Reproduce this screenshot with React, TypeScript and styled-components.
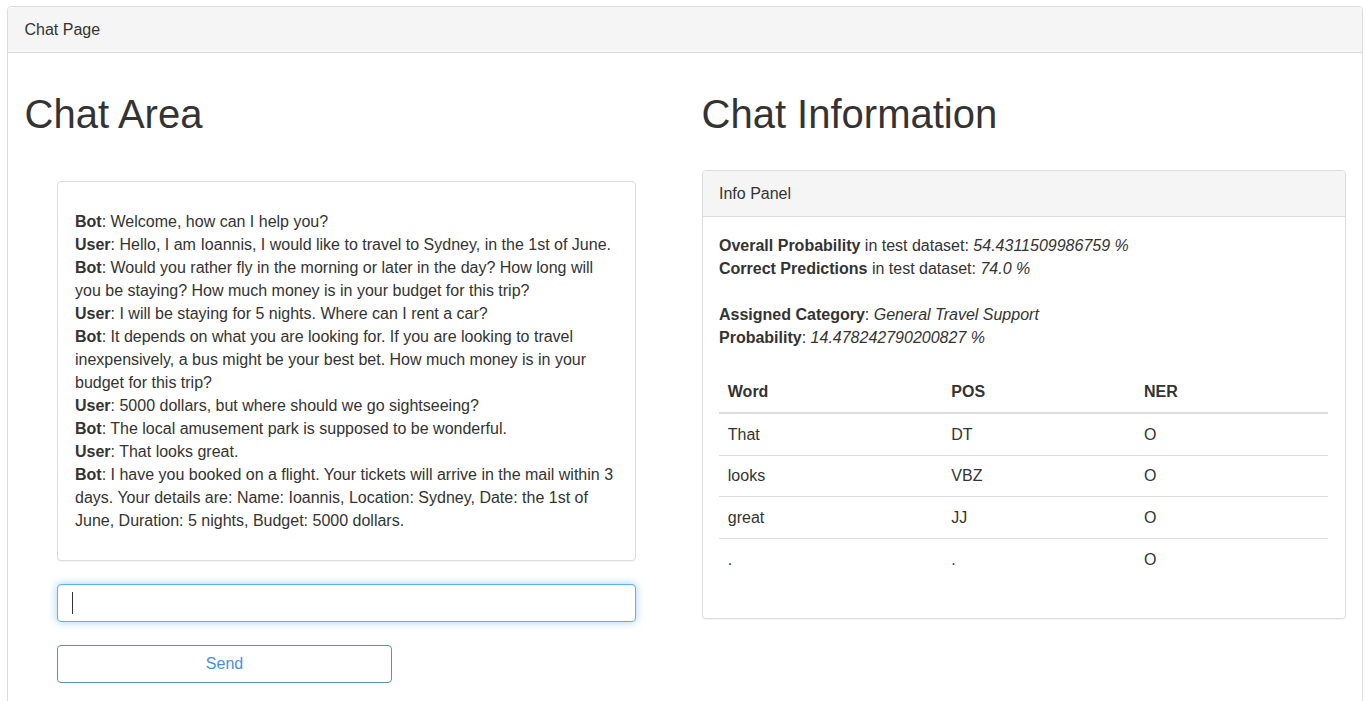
import React from "react";
import styled, { createGlobalStyle } from "styled-components";

const GlobalStyle = createGlobalStyle`
	html, body {
		margin: 0;
		padding: 0;
		background: #fff;
	}
	body {
		font-family: "Liberation Sans", Arial, Helvetica, sans-serif;
		font-size: 16px;
		line-height: 23px;
		color: #333;
	}
	* {
		box-sizing: border-box;
	}
`;

const Page = styled.div`
	padding: 6px 3px 0 7px;
`;

const Panel = styled.div<{ $shadow?: boolean }>`
	background: #fff;
	border: 1px solid #ddd;
	border-radius: 4px;
	box-shadow: ${({ $shadow }) => ($shadow ? "0 1px 1px rgba(0, 0, 0, 0.05)" : "none")};
`;

const PanelHeading = styled.div`
	background: #f5f5f5;
	border-bottom: 1px solid #ddd;
	border-radius: 3px 3px 0 0;
	padding: 11px 16.5px;
	line-height: 23px;
`;

const PanelBody = styled.div<{ $pad?: string }>`
	padding: ${({ $pad }) => $pad || "16.5px"};
`;

const Row = styled.div`
	display: grid;
	grid-template-columns: 1fr 1fr;
	margin: 0 -16.5px;
`;

const Column = styled.div`
	padding: 0 16.5px;
	min-width: 0;
`;

const Title = styled.h1`
	font-family: "Liberation Sans", Arial, Helvetica, sans-serif;
	font-size: 40px;
	font-weight: 500;
	line-height: 44px;
	margin: 22px 0 11px;
	color: #333;
`;

const ChatColumn = styled.div`
	padding: 34.5px 32.5px 40px;
	display: flex;
	flex-direction: column;
	gap: 23px;
`;

const Line = styled.div`
	line-height: 23px;
`;

const InputWrap = styled.div`
	position: relative;
`;

const Input = styled.input`
	display: block;
	width: 100%;
	height: 38px;
	padding: 6px 13px;
	font-family: inherit;
	font-size: 16px;
	color: #555;
	background: #fff;
	border: 1px solid #66afe9;
	border-radius: 4px;
	outline: none;
	box-shadow: inset 0 1px 1px rgba(0, 0, 0, 0.075), 0 0 8px rgba(102, 175, 233, 0.6);
	caret-color: transparent;
`;

/* steady text cursor drawn over the empty field */
const Caret = styled.span`
	position: absolute;
	left: 15px;
	top: 8px;
	width: 1px;
	height: 22px;
	background: #333;
	pointer-events: none;
`;

const SendButton = styled.button`
	width: 335px;
	height: 38px;
	font-family: inherit;
	font-size: 16px;
	color: #4a90d9;
	background: #fff;
	border: 1px solid #5a8ec4;
	border-radius: 4px;
	cursor: pointer;
`;

const InfoColumn = styled.div`
	padding-top: 23.5px;
`;

const Spacer = styled.div`
	height: 23px;
`;

const Table = styled.table`
	width: 100%;
	border-collapse: collapse;
	margin: 23px 0 22px;
	text-align: left;

	th,
	td {
		padding: 8.8px;
		line-height: 23px;
		vertical-align: top;
	}
	th {
		font-weight: bold;
		border-bottom: 2px solid #ddd;
	}
	tbody tr + tr td {
		border-top: 1px solid #ddd;
	}
`;

type Message = { who: "Bot" | "User"; text: string };

const messages: Message[] = [
	{ who: "Bot", text: "Welcome, how can I help you?" },
	{ who: "User", text: "Hello, I am Ioannis, I would like to travel to Sydney, in the 1st of June." },
	{
		who: "Bot",
		text: "Would you rather fly in the morning or later in the day? How long will you be staying? How much money is in your budget for this trip?",
	},
	{ who: "User", text: "I will be staying for 5 nights. Where can I rent a car?" },
	{
		who: "Bot",
		text: "It depends on what you are looking for. If you are looking to travel inexpensively, a bus might be your best bet. How much money is in your budget for this trip?",
	},
	{ who: "User", text: "5000 dollars, but where should we go sightseeing?" },
	{ who: "Bot", text: "The local amusement park is supposed to be wonderful." },
	{ who: "User", text: "That looks great." },
	{
		who: "Bot",
		text: "I have you booked on a flight. Your tickets will arrive in the mail within 3 days. Your details are: Name: Ioannis, Location: Sydney, Date: the 1st of June, Duration: 5 nights, Budget: 5000 dollars.",
	},
];

const tokens = [
	{ word: "That", pos: "DT", ner: "O" },
	{ word: "looks", pos: "VBZ", ner: "O" },
	{ word: "great", pos: "JJ", ner: "O" },
	{ word: ".", pos: ".", ner: "O" },
];

function App() {
	return (
		<Page>
			<GlobalStyle />
			<Panel>
				<PanelHeading>Chat Page</PanelHeading>
				<PanelBody>
					<Row>
						<Column>
							<Title>Chat Area</Title>
							<ChatColumn>
								<Panel $shadow>
									<PanelBody $pad="28px 17px">
										{messages.map((m, i) => (
											<Line key={`msg-${i}`}>
												<b>{m.who}</b>: {m.text}
											</Line>
										))}
									</PanelBody>
								</Panel>
								<InputWrap>
									<Input autoFocus />
									<Caret />
								</InputWrap>
								<div>
									<SendButton>Send</SendButton>
								</div>
							</ChatColumn>
						</Column>
						<Column>
							<Title>Chat Information</Title>
							<InfoColumn>
								<Panel $shadow>
									<PanelHeading>Info Panel</PanelHeading>
									<PanelBody>
										<Line>
											<b>Overall Probability</b> in test dataset: <i>54.4311509986759 %</i>
										</Line>
										<Line>
											<b>Correct Predictions</b> in test dataset: <i>74.0 %</i>
										</Line>
										<Spacer />
										<Line>
											<b>Assigned Category</b>: <i>General Travel Support</i>
										</Line>
										<Line>
											<b>Probability</b>: <i>14.478242790200827 %</i>
										</Line>
										<Table>
											<colgroup>
												<col style={{ width: "36.7%" }} />
												<col style={{ width: "31.65%" }} />
												<col style={{ width: "31.65%" }} />
											</colgroup>
											<thead>
												<tr>
													<th>Word</th>
													<th>POS</th>
													<th>NER</th>
												</tr>
											</thead>
											<tbody>
												{tokens.map((t, i) => (
													<tr key={`tok-${i}`}>
														<td>{t.word}</td>
														<td>{t.pos}</td>
														<td>{t.ner}</td>
													</tr>
												))}
											</tbody>
										</Table>
									</PanelBody>
								</Panel>
							</InfoColumn>
						</Column>
					</Row>
				</PanelBody>
			</Panel>
		</Page>
	);
}

export default App;
